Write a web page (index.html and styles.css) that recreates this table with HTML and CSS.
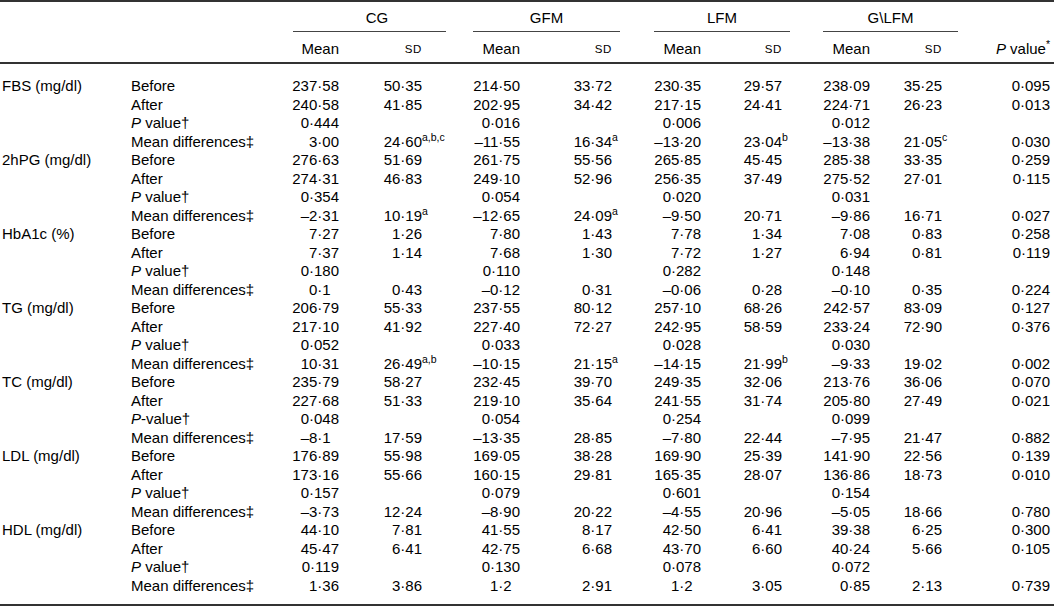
FILE: index.html
```html
<!DOCTYPE html>
<html lang="en">
<head>
<meta charset="utf-8">
<title>Table</title>
<link rel="stylesheet" href="styles.css">
</head>
<body>
<table class="tbl">
<colgroup>
<col class="w-lab"><col class="w-sub">
<col class="w-m1"><col class="w-s1">
<col class="w-m2"><col class="w-s2">
<col class="w-m3"><col class="w-s3">
<col class="w-m4"><col class="w-s4">
<col class="w-p">
</colgroup>
<thead>
<tr class="groups">
<th colspan="2"></th>
<th colspan="2"><span class="rule r-cg">CG</span></th>
<th colspan="2"><span class="rule r-gfm">GFM</span></th>
<th colspan="2"><span class="rule r-lfm">LFM</span></th>
<th colspan="2"><span class="rule r-glfm">G\LFM</span></th>
<th></th>
</tr>
<tr class="cols">
<th></th><th></th>
<th>Mean</th><th><span class="sc">SD</span></th>
<th>Mean</th><th><span class="sc">SD</span></th>
<th>Mean</th><th><span class="sc">SD</span></th>
<th>Mean</th><th><span class="sc">SD</span></th>
<th><i>P</i> value<span class="ast">*</span></th>
</tr>
</thead>
<tbody>
<tr class="first"><td>FBS (mg/dl)</td><td>Before</td><td>237·58</td><td>50·35</td><td>214·50</td><td>33·72</td><td>230·35</td><td>29·57</td><td>238·09</td><td>35·25</td><td>0·095</td></tr>
<tr><td></td><td>After</td><td>240·58</td><td>41·85</td><td>202·95</td><td>34·42</td><td>217·15</td><td>24·41</td><td>224·71</td><td>26·23</td><td>0·013</td></tr>
<tr><td></td><td><i>P</i> value†</td><td>0·444</td><td></td><td>0·016</td><td></td><td>0·006</td><td></td><td>0·012</td><td></td><td></td></tr>
<tr><td></td><td>Mean differences‡</td><td>3·00</td><td>24·60<span class="fn">a,b,c</span></td><td>–11·55</td><td>16·34<span class="fn">a</span></td><td>–13·20</td><td>23·04<span class="fn">b</span></td><td>–13·38</td><td>21·05<span class="fn">c</span></td><td>0·030</td></tr>

<tr><td>2hPG (mg/dl)</td><td>Before</td><td>276·63</td><td>51·69</td><td>261·75</td><td>55·56</td><td>265·85</td><td>45·45</td><td>285·38</td><td>33·35</td><td>0·259</td></tr>
<tr><td></td><td>After</td><td>274·31</td><td>46·83</td><td>249·10</td><td>52·96</td><td>256·35</td><td>37·49</td><td>275·52</td><td>27·01</td><td>0·115</td></tr>
<tr><td></td><td><i>P</i> value†</td><td>0·354</td><td></td><td>0·054</td><td></td><td>0·020</td><td></td><td>0·031</td><td></td><td></td></tr>
<tr><td></td><td>Mean differences‡</td><td>–2·31</td><td>10·19<span class="fn">a</span></td><td>–12·65</td><td>24·09<span class="fn">a</span></td><td>–9·50</td><td>20·71</td><td>–9·86</td><td>16·71</td><td>0·027</td></tr>

<tr><td>HbA1c (%)</td><td>Before</td><td>7·27</td><td>1·26</td><td>7·80</td><td>1·43</td><td>7·78</td><td>1·34</td><td>7·08</td><td>0·83</td><td>0·258</td></tr>
<tr><td></td><td>After</td><td>7·37</td><td>1·14</td><td>7·68</td><td>1·30</td><td>7·72</td><td>1·27</td><td>6·94</td><td>0·81</td><td>0·119</td></tr>
<tr><td></td><td><i>P</i> value†</td><td>0·180</td><td></td><td>0·110</td><td></td><td>0·282</td><td></td><td>0·148</td><td></td><td></td></tr>
<tr><td></td><td>Mean differences‡</td><td class="d1">0·1</td><td>0·43</td><td>–0·12</td><td>0·31</td><td>–0·06</td><td>0·28</td><td>–0·10</td><td>0·35</td><td>0·224</td></tr>

<tr><td>TG (mg/dl)</td><td>Before</td><td>206·79</td><td>55·33</td><td>237·55</td><td>80·12</td><td>257·10</td><td>68·26</td><td>242·57</td><td>83·09</td><td>0·127</td></tr>
<tr><td></td><td>After</td><td>217·10</td><td>41·92</td><td>227·40</td><td>72·27</td><td>242·95</td><td>58·59</td><td>233·24</td><td>72·90</td><td>0·376</td></tr>
<tr><td></td><td><i>P</i> value†</td><td>0·052</td><td></td><td>0·033</td><td></td><td>0·028</td><td></td><td>0·030</td><td></td><td></td></tr>
<tr><td></td><td>Mean differences‡</td><td>10·31</td><td>26·49<span class="fn">a,b</span></td><td>–10·15</td><td>21·15<span class="fn">a</span></td><td>–14·15</td><td>21·99<span class="fn">b</span></td><td>–9·33</td><td>19·02</td><td>0·002</td></tr>

<tr><td>TC (mg/dl)</td><td>Before</td><td>235·79</td><td>58·27</td><td>232·45</td><td>39·70</td><td>249·35</td><td>32·06</td><td>213·76</td><td>36·06</td><td>0·070</td></tr>
<tr><td></td><td>After</td><td>227·68</td><td>51·33</td><td>219·10</td><td>35·64</td><td>241·55</td><td>31·74</td><td>205·80</td><td>27·49</td><td>0·021</td></tr>
<tr><td></td><td><i>P</i>-value†</td><td>0·048</td><td></td><td>0·054</td><td></td><td>0·254</td><td></td><td>0·099</td><td></td><td></td></tr>
<tr><td></td><td>Mean differences‡</td><td class="d1">–8·1</td><td>17·59</td><td>–13·35</td><td>28·85</td><td>–7·80</td><td>22·44</td><td>–7·95</td><td>21·47</td><td>0·882</td></tr>

<tr><td>LDL (mg/dl)</td><td>Before</td><td>176·89</td><td>55·98</td><td>169·05</td><td>38·28</td><td>169·90</td><td>25·39</td><td>141·90</td><td>22·56</td><td>0·139</td></tr>
<tr><td></td><td>After</td><td>173·16</td><td>55·66</td><td>160·15</td><td>29·81</td><td>165·35</td><td>28·07</td><td>136·86</td><td>18·73</td><td>0·010</td></tr>
<tr><td></td><td><i>P</i> value†</td><td>0·157</td><td></td><td>0·079</td><td></td><td>0·601</td><td></td><td>0·154</td><td></td><td></td></tr>
<tr><td></td><td>Mean differences‡</td><td>–3·73</td><td>12·24</td><td>–8·90</td><td>20·22</td><td>–4·55</td><td>20·96</td><td>–5·05</td><td>18·66</td><td>0·780</td></tr>

<tr><td>HDL (mg/dl)</td><td>Before</td><td>44·10</td><td>7·81</td><td>41·55</td><td>8·17</td><td>42·50</td><td>6·41</td><td>39·38</td><td>6·25</td><td>0·300</td></tr>
<tr><td></td><td>After</td><td>45·47</td><td>6·41</td><td>42·75</td><td>6·68</td><td>43·70</td><td>6·60</td><td>40·24</td><td>5·66</td><td>0·105</td></tr>
<tr><td></td><td><i>P</i> value†</td><td>0·119</td><td></td><td>0·130</td><td></td><td>0·078</td><td></td><td>0·072</td><td></td><td></td></tr>
<tr class="last"><td></td><td>Mean differences‡</td><td>1·36</td><td>3·86</td><td class="d1">1·2</td><td>2·91</td><td class="d1">1·2</td><td>3·05</td><td>0·85</td><td>2·13</td><td>0·739</td></tr>
</tbody>
</table>
</body>
</html>
```

FILE: styles.css
```css
html, body {
  margin: 0;
  padding: 0;
  background: #ffffff;
}

body {
  font-family: "Liberation Sans", Arial, sans-serif;
  font-size: 15px;
  color: #000000;
}

.tbl {
  width: 1054px;
  border-collapse: collapse;
  table-layout: fixed;
}

.w-lab { width: 131px; }
.w-sub { width: 152px; }
.w-m1 { width: 56px; }
.w-s1 { width: 124px; }
.w-m2 { width: 57px; }
.w-s2 { width: 124px; }
.w-m3 { width: 57px; }
.w-s3 { width: 112px; }
.w-m4 { width: 57px; }
.w-s4 { width: 88px; }
.w-p { width: 96px; }

.tbl th,
.tbl td {
  padding: 0;
  font-weight: normal;
  white-space: nowrap;
  vertical-align: middle;
}

.tbl td {
  line-height: 18.5px;
}

.tbl th {
  line-height: 18px;
}

/* header: group row */
.groups th {
  border-top: 2px solid #333;
  padding-top: 7px;
  text-align: center;
}

.rule {
  display: block;
  padding-bottom: 4px;
  border-bottom: 1px solid #444;
}

.r-cg { margin: 0 17px 0 10px; padding-left: 15px; }
.r-gfm { margin: 0 24px 0 10px; }
.r-lfm { margin: 0 23px 0 10px; }
.r-glfm { margin: 0 0 0 10px; }

/* header: column row */
.cols th {
  padding-top: 7px;
  padding-bottom: 4px;
  border-bottom: 2px solid #333;
  text-align: right;
}

.sc {
  font-size: 11.5px;
  letter-spacing: 0.6px;
}

.ast {
  display: inline-block;
  font-size: 10.5px;
  line-height: 8px;
  vertical-align: 6px;
}

/* body */
.tbl tbody td {
  text-align: right;
}

.tbl tbody td:nth-child(1) {
  text-align: left;
  padding-left: 2px;
}

.tbl tbody td:nth-child(2) {
  text-align: left;
}

.cols th:nth-child(4),
.tbl tbody td:nth-child(4) { padding-right: 41px; }
.cols th:nth-child(6),
.tbl tbody td:nth-child(6) { padding-right: 32px; }
.cols th:nth-child(8),
.tbl tbody td:nth-child(8) { padding-right: 31px; }
.cols th:nth-child(10),
.tbl tbody td:nth-child(10) { padding-right: 16px; }
.cols th:nth-child(11),
.tbl tbody td:nth-child(11) { padding-right: 4px; }

.tbl tbody td.d1 {
  padding-right: 8.3px;
}

.first td {
  padding-top: 13px;
}

.last td {
  padding-bottom: 9px;
  border-bottom: 2px solid #333;
}

.fn {
  display: inline-block;
  width: 0;
  text-align: left;
  font-size: 10.5px;
  line-height: 8px;
  vertical-align: 6px;
}
```
